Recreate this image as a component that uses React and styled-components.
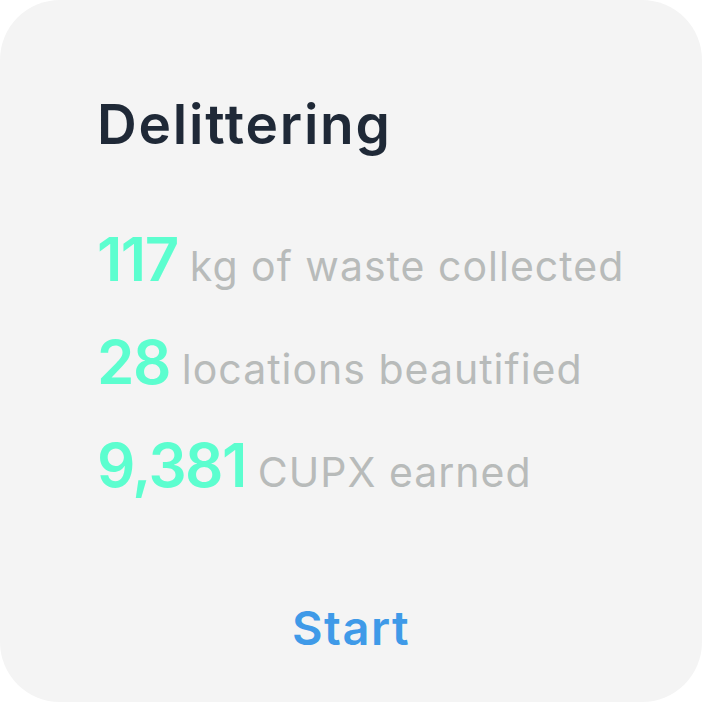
import React from 'react';
import styled, { createGlobalStyle } from 'styled-components';

const GlobalStyle = createGlobalStyle`
    body {
        margin: 0;
        background: #ffffff;
        font-family: Inter, "Noto Sans", sans-serif;
    }
`;

const Card = styled.div`
    width: 702px;
    height: 702px;
    box-sizing: border-box;
    border-radius: 60px;
    background-color: #f4f4f4;
    padding: 88px 0 0 97px;
    display: flex;
    flex-direction: column;
`;

const Title = styled.h1`
    margin: 0;
    font-size: 55px;
    font-weight: 600;
    line-height: 72px;
    color: #1f2937;
    letter-spacing: 1.8px;
`;

const StatList = styled.div`
    margin-top: 60px;
    display: flex;
    flex-direction: column;
    gap: 18px;
`;

const Stat = styled.div`
    display: flex;
    align-items: baseline;
    gap: 12px;
    line-height: 78px;
`;

const Value = styled.span`
    font-size: 60px;
    font-weight: 600;
    color: #5cfecf;
    letter-spacing: -1.5px;
`;

const Label = styled.span`
    font-size: 41px;
    font-weight: 400;
    color: #b8bbba;
    letter-spacing: 1px;
`;

const StartButton = styled.button`
    align-self: center;
    margin: auto 0 46px -97px;
    border: none;
    background: none;
    padding: 0;
    font-family: inherit;
    font-size: 47px;
    font-weight: 600;
    color: #3f9ae8;
    letter-spacing: 1.5px;
    cursor: pointer;
`;

const stats = [
    { value: '117', label: 'kg of waste collected' },
    { value: '28', label: 'locations beautified' },
    { value: '9,381', label: 'CUPX earned' },
];

export default function App() {
    return (
        <>
            <GlobalStyle />
            <Card>
                <Title>Delittering</Title>
                <StatList>
                    {stats.map(stat => (
                        <Stat key={stat.label}>
                            <Value>{stat.value}</Value>
                            <Label>{stat.label}</Label>
                        </Stat>
                    ))}
                </StatList>
                <StartButton>Start</StartButton>
            </Card>
        </>
    );
}
